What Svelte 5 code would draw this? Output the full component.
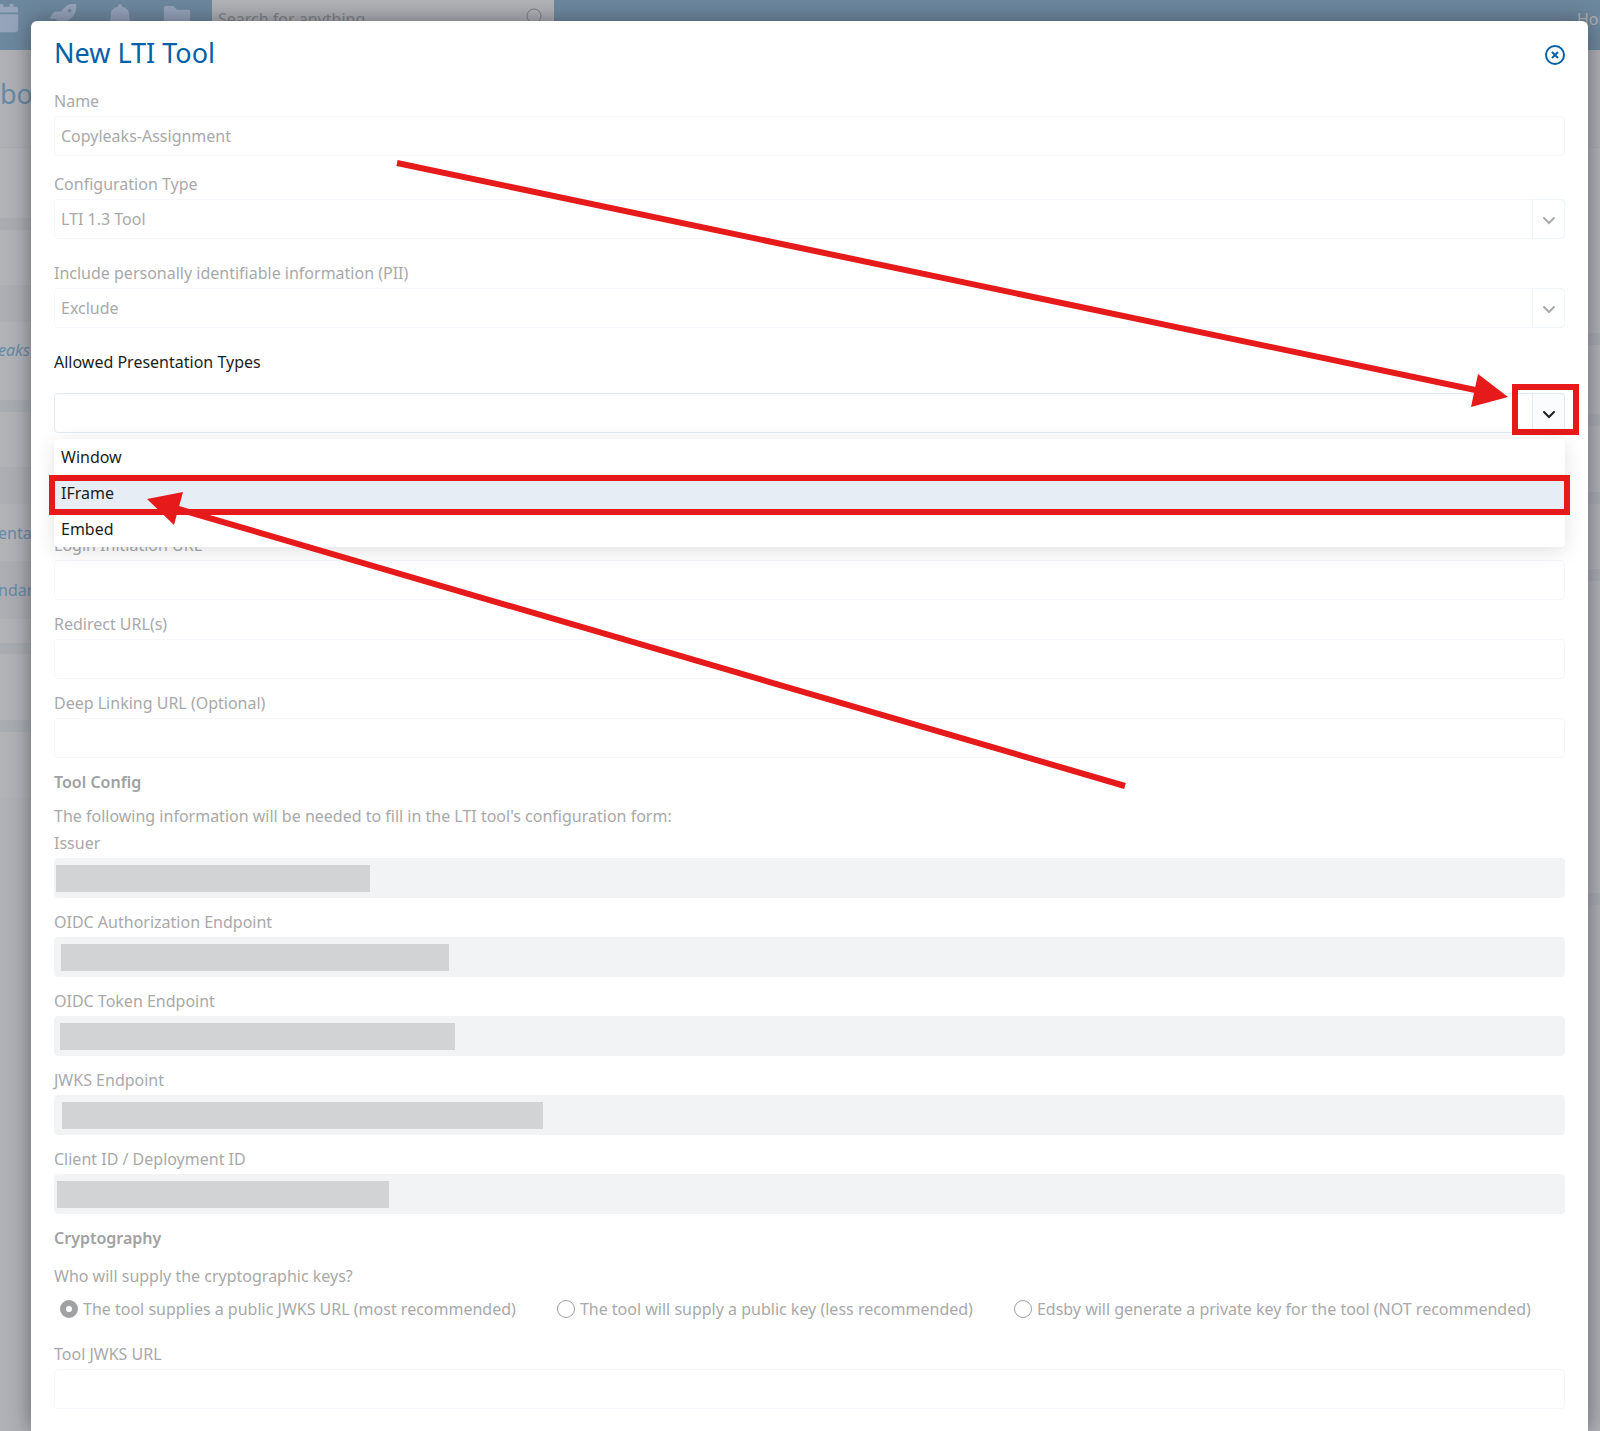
<script lang="ts">
  interface Redacted {
    id: string;
    label: string;
    inset: number;
    width: number;
  }

  interface Strip {
    height: number;
    kind: string;
    text?: string;
  }

  let name = $state('Copyleaks-Assignment');
  let configType = $state('LTI 1.3 Tool');
  let pii = $state('Exclude');
  let presentation = $state('');
  let menuOpen = $state(true);
  let active = $state('IFrame');
  let keySource = $state('jwks');

  const presentationTypes = ['Window', 'IFrame', 'Embed'];

  const urlFields = [
    { id: 'login-url', label: 'Login Initiation URL' },
    { id: 'redirect-url', label: 'Redirect URL(s)' },
    { id: 'deep-url', label: 'Deep Linking URL (Optional)' },
  ];

  const endpoints: Redacted[] = [
    { id: 'issuer', label: 'Issuer', inset: 2, width: 314 },
    { id: 'oidc-auth', label: 'OIDC Authorization Endpoint', inset: 7, width: 388 },
    { id: 'oidc-token', label: 'OIDC Token Endpoint', inset: 6, width: 395 },
    { id: 'jwks', label: 'JWKS Endpoint', inset: 8, width: 481 },
    { id: 'client-id', label: 'Client ID / Deployment ID', inset: 3, width: 332 },
  ];

  const keySources = [
    { value: 'jwks', label: 'The tool supplies a public JWKS URL (most recommended)' },
    { value: 'public', label: 'The tool will supply a public key (less recommended)' },
    { value: 'private', label: 'Edsby will generate a private key for the tool (NOT recommended)' },
  ];

  // Page rows that show on either side of the dialog
  const leftStrips: Strip[] = [
    { height: 70, kind: 'row' },
    { height: 12, kind: 'band' },
    { height: 55, kind: 'row' },
    { height: 37, kind: 'head' },
    { height: 56, kind: 'row italic', text: 'eaks' },
    { height: 22, kind: 'row' },
    { height: 12, kind: 'band' },
    { height: 55, kind: 'row' },
    { height: 37, kind: 'head' },
    { height: 57, kind: 'row', text: 'enta' },
    { height: 58, kind: 'head', text: 'ndar' },
    { height: 24, kind: 'row' },
    { height: 11, kind: 'band' },
    { height: 66, kind: 'row' },
    { height: 12, kind: 'band' },
    { height: 66, kind: 'row' },
  ];

  const rightStrips: Strip[] = [
    { height: 185, kind: 'row' },
    { height: 12, kind: 'band' },
    { height: 69, kind: 'row' },
    { height: 12, kind: 'band' },
    { height: 66, kind: 'row' },
    { height: 12, kind: 'band' },
    { height: 65, kind: 'row' },
    { height: 12, kind: 'band' },
    { height: 312, kind: 'row' },
    { height: 12, kind: 'band' },
  ];

  function pick(type: string) {
    presentation = type;
    menuOpen = false;
  }
</script>

{#snippet chevron()}
  <svg class="chevron" viewBox="0 0 14 10" aria-hidden="true">
    <path d="M2 2l5 5 5-5" />
  </svg>
{/snippet}

{#snippet strips(list: Strip[])}
  {#each list as strip}
    <div class="strip {strip.kind}" style="height: {strip.height}px">
      {#if strip.text}<a href="#top">{strip.text}</a>{/if}
    </div>
  {/each}
{/snippet}

<div class="app">
  <div class="page">
    <header class="topbar">
      <nav class="icons" aria-label="Main">
        <a href="#calendar" aria-label="Calendar">
          <svg viewBox="0 0 28 32">
            <path d="M2 3h5V1a2 2 0 0 1 4 0v2h7V1a2 2 0 0 1 4 0v2h2a3 3 0 0 1 3 3v3H0V6a3 3 0 0 1 2-3zM0 11h27v16a3 3 0 0 1-3 3H3a3 3 0 0 1-3-3z" />
          </svg>
        </a>
        <a href="#launch" aria-label="Launch">
          <svg viewBox="0 0 28 32">
            <path fill-rule="evenodd" d="M28 0c1 8-2 14-10 18v6c-2 3-4 4-7 5v-8l-5-5H0c1-4 3-7 6-8h6C16 2 21-1 28 0zM21 5a2 2 0 1 0 .1 0z" />
          </svg>
        </a>
        <a href="#alerts" aria-label="Alerts">
          <svg viewBox="0 0 28 32">
            <path d="M14 0a2 2 0 0 1 2 2v1c5 1 8 4 8 9 0 6 2 8 3 11H1c1-3 3-5 3-11 0-5 3-8 8-9V2a2 2 0 0 1 2-2z" />
          </svg>
        </a>
        <a href="#files" aria-label="Files">
          <svg viewBox="0 0 28 32">
            <path d="M2 2h8l4 4h12a2 2 0 0 1 2 2v16H0V4a2 2 0 0 1 2-2z" />
          </svg>
        </a>
      </nav>
      <div class="search">
        <input type="search" placeholder="Search for anything..." aria-label="Search" />
        <svg viewBox="0 0 18 20" aria-hidden="true">
          <circle cx="10" cy="8" r="7" />
          <path d="M5 13l-4 5" />
        </svg>
      </div>
      <a class="home" href="#home">Home</a>
    </header>
    <div class="columns">
      <div class="column">
        <div class="crumb">bo</div>
        {@render strips(leftStrips)}
      </div>
      <div class="column">
        <div class="crumb"></div>
        {@render strips(rightStrips)}
      </div>
    </div>
  </div>

  <form class="dialog" aria-labelledby="dialog-title">
    <div class="title">
      <h1 id="dialog-title">New LTI Tool</h1>
      <button type="button" class="close" aria-label="Close">
        <svg viewBox="0 0 22 22" aria-hidden="true">
          <circle cx="12" cy="12" r="9" />
          <path d="M9 9l6 6M15 9l-6 6" />
        </svg>
      </button>
    </div>

    <div class="field roomy">
      <label for="name">Name</label>
      <input id="name" type="text" bind:value={name} />
    </div>

    <div class="field wide">
      <label for="config-type">Configuration Type</label>
      <div class="select">
        <select id="config-type" bind:value={configType}>
          <option>LTI 1.3 Tool</option>
        </select>
        <span class="arrow">{@render chevron()}</span>
      </div>
    </div>

    <div class="field wide">
      <label for="pii">Include personally identifiable information (PII)</label>
      <div class="select">
        <select id="pii" bind:value={pii}>
          <option>Exclude</option>
          <option>Include</option>
        </select>
        <span class="arrow">{@render chevron()}</span>
      </div>
    </div>

    <div class="field presentation">
      <label for="presentation">Allowed Presentation Types</label>
      <div class="select">
        <input
          id="presentation"
          type="text"
          role="combobox"
          aria-expanded={menuOpen}
          aria-controls="presentation-menu"
          bind:value={presentation}
        />
        <button
          type="button"
          class="arrow"
          aria-label="Show presentation types"
          onclick={() => { menuOpen = !menuOpen; }}
        >
          {@render chevron()}
        </button>
        <span class="mark mark-arrow"></span>
        {#if menuOpen}
          <div class="menu" id="presentation-menu" role="listbox">
            {#each presentationTypes as type}
              <button
                type="button"
                class="option"
                class:active={active === type}
                role="option"
                aria-selected={active === type}
                onmouseenter={() => { active = type; }}
                onclick={() => pick(type)}
              >
                {type}
                {#if type === 'IFrame'}<span class="mark mark-option"></span>{/if}
              </button>
            {/each}
          </div>
        {/if}
      </div>
    </div>

    {#each urlFields as field}
      <div class="field">
        <label for={field.id}>{field.label}</label>
        <input id={field.id} type="text" />
      </div>
    {/each}

    <h2>Tool Config</h2>
    <p class="hint">The following information will be needed to fill in the LTI tool's configuration form:</p>

    {#each endpoints as field}
      <div class="field">
        <label for={field.id}>{field.label}</label>
        <div class="locked">
          <input id={field.id} type="text" readonly />
          <span class="redaction" style="left: {field.inset}px; width: {field.width}px"></span>
        </div>
      </div>
    {/each}

    <h2>Cryptography</h2>
    <fieldset>
      <legend>Who will supply the cryptographic keys?</legend>
      <div class="radios">
        {#each keySources as source}
          <label>
            <input type="radio" name="keys" value={source.value} bind:group={keySource} />
            {source.label}
          </label>
        {/each}
      </div>
    </fieldset>

    <div class="field">
      <label for="jwks-url">Tool JWKS URL</label>
      <input id="jwks-url" type="text" />
    </div>
  </form>

  <svg class="pointers" viewBox="0 0 1600 1431" preserveAspectRatio="xMinYMin meet" aria-hidden="true">
    <path class="line" d="M397 163L1480 391" />
    <path class="head" d="M1508 397L1478 374L1471 407z" />
    <path class="line" d="M1125 786L175 508" />
    <path class="head" d="M147 499L183 492L174 525z" />
  </svg>
</div>

<style>
  :global(body) {
    margin: 0;
    background: #b0b1b6;
  }

  .app {
    display: grid;
    grid-template-columns: minmax(0, 1fr);
    position: relative;
    min-height: 100vh;
    overflow: hidden;
    font-family: 'Noto Sans', 'Open Sans', sans-serif;
    font-size: 16px;
    line-height: 24px;
    color: #a8a9aa;
  }

  .app *,
  .app *::before {
    box-sizing: border-box;
  }

  .page,
  .dialog {
    grid-area: 1 / 1;
  }

  .page {
    min-width: 0;
    background: #b0b1b6;
  }

  .topbar {
    display: flex;
    height: 50px;
    background: #6c889e;
    overflow: hidden;
  }

  .icons {
    display: flex;
    flex: none;
    gap: 29px;
    width: 220px;
    margin-left: -8px;
    padding-top: 4px;
  }

  .icons svg {
    display: block;
    width: 28px;
    height: 30px;
    fill: #96a5bc;
  }

  .search {
    display: flex;
    flex: none;
    width: 342px;
    padding: 8px 12px 0 6px;
    background: #b2b3b7;
  }

  .search input {
    flex: 1;
    min-width: 0;
    height: 22px;
    padding: 0;
    border: none;
    outline: none;
    background: transparent;
    font: inherit;
  }

  .search input::placeholder {
    color: #818387;
    opacity: 1;
  }

  .search svg {
    width: 18px;
    height: 20px;
    fill: none;
    stroke: #7b7d82;
    stroke-width: 1;
  }

  .home {
    flex: none;
    width: 23px;
    margin-left: auto;
    padding-top: 7px;
    color: #b2b3b7;
    text-decoration: none;
  }

  .columns {
    display: flex;
    justify-content: space-between;
  }

  .column {
    width: 50%;
  }

  .crumb {
    height: 98px;
    padding-top: 26px;
    border-bottom: 1px solid #acadb1;
    font-size: 27px;
    line-height: 36px;
    color: #668aa6;
  }

  .strip {
    display: flex;
    align-items: center;
    background: #b2b3b7;
  }

  .strip.head {
    background: #adaeb3;
  }

  .strip.band {
    background: #a9adb2;
  }

  .strip a {
    margin-left: -2px;
    color: #668aa6;
    text-decoration: none;
  }

  .strip.italic a {
    font-style: italic;
  }

  .dialog {
    margin: 21px 12px 0 31px;
    padding: 15px 23px 10px;
    border-radius: 6px 6px 0 0;
    background: #fff;
    box-shadow: 0 0 22px rgba(50, 50, 60, 0.6);
  }

  .title {
    display: flex;
    align-items: center;
    justify-content: space-between;
    height: 36px;
    margin-bottom: 17px;
  }

  h1 {
    margin: 0;
    padding-bottom: 2px;
    font-size: 27px;
    font-weight: 400;
    line-height: 34px;
    color: #0061a6;
  }

  .close {
    padding: 0;
    border: none;
    background: none;
    cursor: pointer;
  }

  .close svg {
    display: block;
    width: 22px;
    height: 22px;
    fill: none;
    stroke: #0061a6;
    stroke-width: 2;
  }

  .field {
    margin-bottom: 12px;
  }

  .field.roomy {
    margin-bottom: 16px;
  }

  .field.wide {
    margin-bottom: 22px;
  }

  .field > label {
    display: block;
    margin-bottom: 3px;
  }

  .field input,
  select {
    display: block;
    width: 100%;
    height: 40px;
    padding: 0 6px;
    border: 1px solid #f4f7fb;
    border-radius: 4px;
    outline: none;
    appearance: none;
    background: #fff;
    font: inherit;
    color: inherit;
  }

  .select {
    display: flex;
    position: relative;
  }

  .arrow {
    display: flex;
    position: absolute;
    top: 0;
    right: 0;
    align-items: center;
    justify-content: center;
    width: 33px;
    height: 40px;
    padding: 4px 0 0;
    border: 1px solid #f0f5fa;
    border-radius: 0 4px 4px 0;
    background: none;
    color: inherit;
    pointer-events: none;
  }

  button.arrow {
    background: #fbfcfd;
    border-color: #e3ebf3;
    color: #1c1e20;
    pointer-events: auto;
  }

  .chevron {
    width: 14px;
    height: 10px;
    fill: none;
    stroke: currentColor;
    stroke-width: 2;
    stroke-linecap: round;
  }

  .presentation {
    margin-bottom: 100px;
    color: #1c1e20;
  }

  .presentation > label {
    margin-bottom: 19px;
  }

  .presentation input {
    border-color: #e3ebf3;
  }

  .menu {
    position: absolute;
    z-index: 1;
    top: 46px;
    left: 0;
    right: 0;
    border-radius: 4px;
    background: #fff;
    box-shadow: 0 4px 20px rgba(0, 0, 0, 0.12);
  }

  .option {
    display: block;
    position: relative;
    width: 100%;
    height: 36px;
    padding: 0 7px;
    border: none;
    background: none;
    font: inherit;
    text-align: left;
    color: #1c1e20;
    cursor: pointer;
  }

  .option.active {
    background: #e6edf5;
  }

  .mark {
    position: absolute;
    border: 6px solid #e61a1a;
    pointer-events: none;
  }

  .mark-arrow {
    top: -9px;
    right: -14px;
    width: 67px;
    height: 51px;
  }

  .mark-option {
    inset: 0 -5px -4px;
  }

  h2 {
    margin: 0 0 10px;
    font-size: 16px;
    font-weight: 600;
    line-height: 24px;
    color: #a0a1a3;
  }

  .hint {
    margin: 0 0 3px;
  }

  .locked {
    position: relative;
  }

  .locked input {
    border-color: #f2f3f5;
    background: #f2f3f5;
  }

  .redaction {
    position: absolute;
    top: 7px;
    height: 27px;
    background: #d1d3d4;
  }

  fieldset {
    margin: 14px 0 21px;
    padding: 0;
    border: none;
  }

  legend {
    padding: 0;
  }

  .radios {
    display: flex;
    flex-wrap: wrap;
    gap: 0 41px;
    padding: 9px 0 0 6px;
  }

  .radios label {
    display: flex;
    align-items: center;
    gap: 5px;
  }

  .radios input {
    width: 18px;
    height: 18px;
    margin: 0;
    border: 1px solid #a0a1a3;
    border-radius: 50%;
    appearance: none;
  }

  .radios input:checked {
    border-width: 6px;
  }

  .pointers {
    position: absolute;
    z-index: 2;
    top: 0;
    left: 0;
    width: 100%;
    pointer-events: none;
  }

  .line {
    fill: none;
    stroke: #e61a1a;
    stroke-width: 6;
  }

  .head {
    fill: #e61a1a;
  }
</style>
